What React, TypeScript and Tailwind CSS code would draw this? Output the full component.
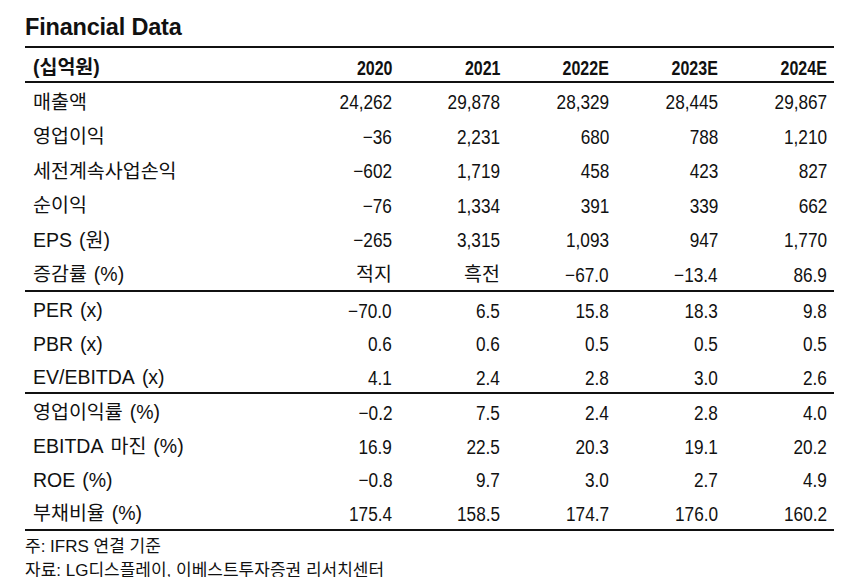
import React from "react";

const font = { fontFamily: '"Liberation Sans", "Noto Sans CJK KR", sans-serif' };

type Row = [string, string, string, string, string, string];

const g1: Row[] = [
  ["매출액", "24,262", "29,878", "28,329", "28,445", "29,867"],
  ["영업이익", "−36", "2,231", "680", "788", "1,210"],
  ["세전계속사업손익", "−602", "1,719", "458", "423", "827"],
  ["순이익", "−76", "1,334", "391", "339", "662"],
  ["EPS (원)", "−265", "3,315", "1,093", "947", "1,770"],
  ["증감률 (%)", "적지", "흑전", "−67.0", "−13.4", "86.9"],
];
const g2: Row[] = [
  ["PER (x)", "−70.0", "6.5", "15.8", "18.3", "9.8"],
  ["PBR (x)", "0.6", "0.6", "0.5", "0.5", "0.5"],
  ["EV/EBITDA (x)", "4.1", "2.4", "2.8", "3.0", "2.6"],
];
const g3: Row[] = [
  ["영업이익률 (%)", "−0.2", "7.5", "2.4", "2.8", "4.0"],
  ["EBITDA 마진 (%)", "16.9", "22.5", "20.3", "19.1", "20.2"],
  ["ROE (%)", "−0.8", "9.7", "3.0", "2.7", "4.9"],
  ["부채비율 (%)", "175.4", "158.5", "174.7", "176.0", "160.2"],
];

function Label({ text, bold }: { text: string; bold?: boolean }) {
  const parts = text.split(" ");
  return (
    <div className={`pl-[8px] text-[19.5px] text-[#111] whitespace-nowrap ${bold ? "font-bold" : ""}`}>
      {parts.map((p, i) => (
        <span key={i} className={i > 0 ? "ml-[7px]" : ""}>
          {p}
        </span>
      ))}
    </div>
  );
}

function DataRow({ r, h }: { r: Row; h: string }) {
  return (
    <div className={`grid grid-cols-[259px_108px_108px_109px_109px_109px] pr-[8px] items-center pt-[4px] ${h}`}>
      <Label text={r[0]} />
      {r.slice(1).map((v, i) => {
        const korean = /[가-힣]/.test(v);
        return (
          <div key={i} className="text-right text-[#111] whitespace-nowrap">
            {korean ? (
              <span className="text-[19.5px]">{v}</span>
            ) : (
              <span className="inline-block text-[20px] origin-right scale-x-[0.86]">{v}</span>
            )}
          </div>
        );
      })}
    </div>
  );
}

function Line() {
  return <div className="h-[2px] bg-[#111]" />;
}

export default function App() {
  return (
    <div className="w-[846px] h-[577px] bg-white overflow-hidden" style={font}>
      <div className="pl-[25px] pr-[12px]">
        <div className="h-[46px] flex items-center pt-[10px]">
          <div className="text-[23.5px] font-bold text-[#111] tracking-[-0.2px]">Financial Data</div>
        </div>
        <Line />
        <div className="grid grid-cols-[259px_108px_108px_109px_109px_109px] pr-[8px] items-center h-[33px] pt-[5px]">
          <Label text="(십억원)" bold />
          {["2020", "2021", "2022E", "2023E", "2024E"].map((v) => (
            <div key={v} className="text-right text-[#111] whitespace-nowrap">
              <span className="inline-block text-[20px] font-bold origin-right scale-x-[0.8]">{v}</span>
            </div>
          ))}
        </div>
        <Line />
        {g1.map((r) => (
          <DataRow key={r[0]} r={r} h="h-[34.5px]" />
        ))}
        <Line />
        {g2.map((r) => (
          <DataRow key={r[0]} r={r} h="h-[33.3px]" />
        ))}
        <Line />
        {g3.map((r) => (
          <DataRow key={r[0]} r={r} h="h-[33.7px]" />
        ))}
        <Line />
        <div className="text-[17px] text-[#111] mt-[4px] leading-[24px] whitespace-nowrap">주: IFRS 연결 기준</div>
        <div className="text-[17px] text-[#111] leading-[24px] whitespace-nowrap">자료: LG디스플레이, 이베스트투자증권 리서치센터</div>
      </div>
    </div>
  );
}
